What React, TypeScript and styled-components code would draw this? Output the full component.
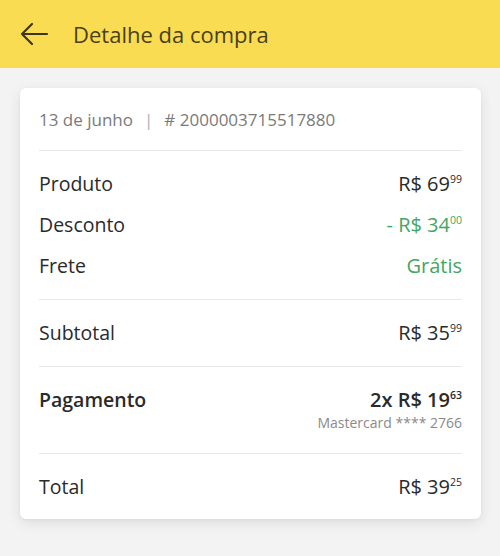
import React from "react";
import styled, { createGlobalStyle } from "styled-components";

const Global = createGlobalStyle`
  html, body { margin: 0; padding: 0; }
  body {
    background: #f3f3f3;
    font-family: "Open Sans", "Noto Sans", sans-serif;
    -webkit-font-smoothing: antialiased;
  }
`;

const Page = styled.div`
  width: 500px;
  height: 556px;
  background: #f3f3f3;
  overflow: hidden;
`;

const Header = styled.header`
  height: 68px;
  background: #f9dc52;
  display: flex;
  align-items: center;
  padding-left: 19px;
  padding-bottom: 1px;
  gap: 24px;
  box-sizing: border-box;
`;

const Title = styled.h1`
  margin: 0;
  font-size: 22px;
  font-weight: 400;
  color: #4a3f17;
  line-height: 1;
`;

const BackButton = styled.button`
  border: 0;
  background: none;
  padding: 0;
  display: flex;
  width: 30px;
  height: 30px;
  align-items: center;
  justify-content: center;
`;

const Card = styled.section`
  margin: 20px 19px 0 20px;
  background: #fff;
  border-radius: 6px;
  box-shadow: 0 4px 14px rgba(0, 0, 0, 0.09), 0 1px 3px rgba(0, 0, 0, 0.05);
  padding: 0 19px;
`;

const Meta = styled.div`
  height: 62px;
  display: flex;
  align-items: center;
  gap: 11px;
  font-size: 17px;
  line-height: 1;
  color: #7a7a7a;
  border-bottom: 1px solid #e8e8e8;
`;

const Pipe = styled.span`
  color: #b0b0b0;
`;

const Section = styled.div<{ $pt?: number; $pb?: number; $last?: boolean }>`
  padding: ${(p) => p.$pt ?? 0}px 0 ${(p) => p.$pb ?? 0}px;
  border-bottom: ${(p) => (p.$last ? "none" : "1px solid #e8e8e8")};
`;

const Row = styled.div<{ $h: number; $lift?: number }>`
  height: ${(p) => p.$h}px;
  box-sizing: border-box;
  padding-bottom: ${(p) => p.$lift ?? 3}px;
  display: flex;
  align-items: center;
  justify-content: space-between;
  line-height: 1;
`;

const Label = styled.span<{ $bold?: boolean }>`
  font-size: 19.5px;
  color: #2a2a2a;
  font-weight: ${(p) => (p.$bold ? 600 : 400)};
`;

const Value = styled.span<{ $green?: boolean; $bold?: boolean }>`
  font-size: 20px;
  color: ${(p) => (p.$green ? "#43a65f" : "#2a2a2a")};
  font-weight: ${(p) => (p.$bold ? 600 : 400)};
  white-space: nowrap;
`;

const Cents = styled.sup`
  font-size: 10.5px;
  vertical-align: 0;
  position: relative;
  top: -8px;
`;

const PayBlock = styled.div`
  display: flex;
  justify-content: space-between;
  align-items: flex-start;
`;

const PayRight = styled.div`
  display: flex;
  flex-direction: column;
  align-items: flex-end;
`;

const Line = styled.div<{ $h: number }>`
  height: ${(p) => p.$h}px;
  box-sizing: border-box;
  padding-bottom: 3px;
  display: flex;
  align-items: center;
  line-height: 1;
`;

const Card4 = styled.span`
  font-size: 14px;
  color: #8a8a8a;
`;

const Price = ({ int, cents, prefix = "" }: { int: string; cents: string; prefix?: string }) => (
  <>
    {prefix}R$ {int}
    <Cents>{cents}</Cents>
  </>
);

export default function App() {
  return (
    <Page>
      <Global />
      <Header>
        <BackButton aria-label="Voltar">
          <svg width="30" height="30" viewBox="0 0 30 30" fill="none">
            <path d="M28 15H3M13 5L3 15l10 10" stroke="#3e3512" strokeWidth="2.2" strokeLinecap="round" strokeLinejoin="round" />
          </svg>
        </BackButton>
        <Title>Detalhe da compra</Title>
      </Header>
      <Card>
        <Meta>
          <span>13 de junho</span>
          <Pipe>|</Pipe>
          <span># 2000003715517880</span>
        </Meta>
        <Section $pt={14} $pb={11}>
          <Row $h={41}>
            <Label>Produto</Label>
            <Value><Price int="69" cents="99" /></Value>
          </Row>
          <Row $h={41}>
            <Label>Desconto</Label>
            <Value $green><Price prefix="- " int="34" cents="00" /></Value>
          </Row>
          <Row $h={41}>
            <Label>Frete</Label>
            <Value $green>Grátis</Value>
          </Row>
        </Section>
        <Section>
          <Row $h={66} $lift={1}>
            <Label>Subtotal</Label>
            <Value><Price int="35" cents="99" /></Value>
          </Row>
        </Section>
        <Section $pt={22} $pb={18}>
          <PayBlock>
            <Line $h={24}><Label $bold>Pagamento</Label></Line>
            <PayRight>
              <Line $h={24}><Value $bold>2x <Price int="19" cents="63" /></Value></Line>
              <Line $h={22}><Card4>Mastercard **** 2766</Card4></Line>
            </PayRight>
          </PayBlock>
        </Section>
        <Section $last>
          <Row $h={65} $lift={0}>
            <Label>Total</Label>
            <Value><Price int="39" cents="25" /></Value>
          </Row>
        </Section>
      </Card>
    </Page>
  );
}
